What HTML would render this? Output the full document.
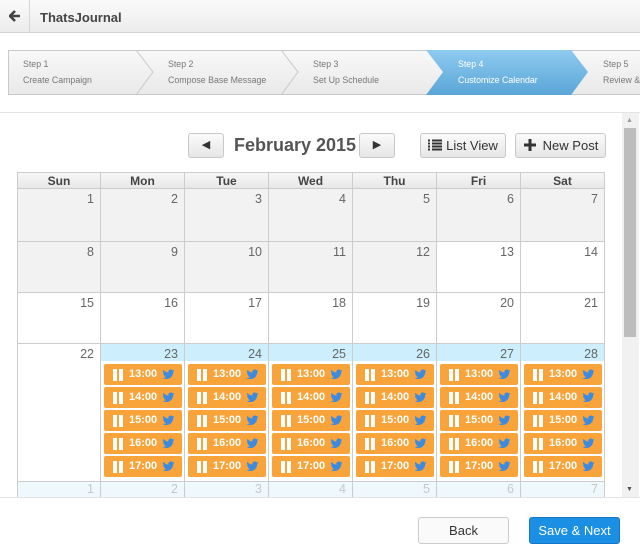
<!DOCTYPE html>
<html><head><meta charset="utf-8"><style>
*{box-sizing:border-box;margin:0;padding:0}
body{width:640px;height:548px;overflow:hidden;background:#fff;font-family:"Liberation Sans",Arial,sans-serif;position:relative;color:#555}
.a{position:absolute}
.top{left:0;top:0;width:640px;height:33px;background:linear-gradient(#fafafa,#ececec);border-bottom:1px solid #d0d0d0}
.steps{left:8px;top:50px;width:640px;height:45px;border:1px solid #c8c8c8;background:linear-gradient(#f8f8f8,#e9e9e9)}
.st{position:absolute;top:8px;font-size:8.8px;color:#777;line-height:16px;white-space:nowrap}
.btn{position:absolute;border:1px solid #c8c8c8;border-radius:3px;background:linear-gradient(#fafafa,#e6e6e6);font-size:13px;color:#333;text-align:center}
.c{position:absolute;border-right:1px solid #ccc;border-bottom:1px solid #ccc;font-size:12.5px;color:#666;text-align:right;padding:3px 6px 0 0}
.g{background:#f2f2f2}
.h{position:absolute;top:172px;height:17px;background:linear-gradient(#f6f6f6,#e8e8e8);border:1px solid #ccc;border-left:none;font-weight:bold;font-size:12px;color:#444;text-align:center;line-height:16px}
.ev{position:absolute;width:78px;height:21px;background:#f9a43a;border-radius:2px;color:#fff;font-weight:bold;font-size:11px}
.ev i{position:absolute;top:5px;width:4px;height:12px;background:#fff}
.ev span{position:absolute;left:25px;top:4px}
.ev svg{position:absolute;left:58px;top:4px;width:13px;height:13px}
.nx{position:absolute;top:482px;height:15px;background:#eef8fd;border-right:1px solid #ccc;color:#c8c8c8;font-size:12.5px;text-align:right;padding-right:6px;overflow:hidden}
</style></head><body>
<svg width="0" height="0" style="position:absolute"><symbol id="tw" viewBox="0 0 24 24"><path fill="#3d8be0" d="M23 5a9 9 0 0 1-2.6.7A4.5 4.5 0 0 0 22.4 3a9 9 0 0 1-2.9 1.1A4.5 4.5 0 0 0 11.8 8.2 12.8 12.8 0 0 1 2.5 3.5a4.5 4.5 0 0 0 1.4 6 4.5 4.5 0 0 1-2-.6 4.5 4.5 0 0 0 3.6 4.4 4.5 4.5 0 0 1-2 .1 4.5 4.5 0 0 0 4.2 3.1A9 9 0 0 1 1 18.4 12.8 12.8 0 0 0 7.9 20.4c8.3 0 12.8-6.9 12.8-12.8v-.6A9 9 0 0 0 23 5z"/></symbol></svg>
<div class="a top"></div>
<div class="a" style="left:29px;top:0;width:1px;height:32px;background:#d6d6d6"></div>
<svg class="a" style="left:9px;top:10px" width="12" height="12" viewBox="0 0 12 12"><path d="M6 1L1 6l5 5M1.5 6H11" stroke="#444" stroke-width="2.6" fill="none"/></svg>
<div class="a" style="left:40px;top:10px;font-size:13px;font-weight:bold;color:#444">ThatsJournal</div>

<div class="a steps"></div>
<svg class="a" style="left:8px;top:50px" width="632" height="45"><path d="M128 0l17 22-17 23M273 0l17 22-17 23" stroke="#c8c8c8" fill="none"/><defs><linearGradient id="bg" x1="0" y1="0" x2="0" y2="1"><stop offset="0" stop-color="#8ecbf0"/><stop offset="1" stop-color="#5aa5d8"/></linearGradient></defs><path d="M418 0h145l17 22-17 23H418l17-23z" fill="url(#bg)"/></svg>
<div class="st" style="left:23px;top:56px">Step 1<br>Create Campaign</div>
<div class="st" style="left:168px;top:56px">Step 2<br>Compose Base Message</div>
<div class="st" style="left:313px;top:56px">Step 3<br>Set Up Schedule</div>
<div class="st" style="left:458px;top:56px;color:#fff">Step 4<br>Customize Calendar</div>
<div class="st" style="left:603px;top:56px">Step 5<br>Review &amp;</div>

<div class="a" style="left:0;top:112px;width:640px;height:1px;background:#e4e4e4"></div>
<div class="a" style="left:622px;top:113px;width:17px;height:384px;background:#f1f1f1"></div>
<div class="a" style="left:624px;top:128px;width:12px;height:209px;background:#bdbdbd"></div>
<div class="a" style="left:626px;top:117px;font-size:7px;color:#999">▲</div>
<div class="a" style="left:626px;top:486px;font-size:7px;color:#555">▼</div>

<div class="btn" style="left:188px;top:133px;width:36px;height:25px;line-height:23px;font-size:11px">◀</div>
<div class="a" style="left:234px;top:135px;font-size:18px;font-weight:bold;color:#555">February 2015</div>
<div class="btn" style="left:359px;top:133px;width:36px;height:25px;line-height:23px;font-size:11px">▶</div>
<div class="btn" style="left:420px;top:133px;width:86px;height:25px;line-height:23px;padding-left:18px">List View</div>
<svg class="a" style="left:428px;top:139px" width="14" height="12"><path d="M0 1.5h2M4 1.5h10M0 4.5h2M4 4.5h10M0 7.5h2M4 7.5h10M0 10.5h2M4 10.5h10" stroke="#333" stroke-width="2"/></svg>
<div class="btn" style="left:515px;top:133px;width:91px;height:25px;line-height:23px;padding-left:20px">New Post</div>
<svg class="a" style="left:524px;top:139px" width="12" height="12"><path d="M6 0v12M0 6h12" stroke="#333" stroke-width="3"/></svg>

<div class="a" style="left:17px;top:172px;width:1px;height:325px;background:#ccc"></div>
<div class="h" style="left:17px;width:84px;border-left:1px solid #ccc">Sun</div>
<div class="h" style="left:101px;width:84px">Mon</div>
<div class="h" style="left:185px;width:84px">Tue</div>
<div class="h" style="left:269px;width:84px">Wed</div>
<div class="h" style="left:353px;width:84px">Thu</div>
<div class="h" style="left:437px;width:84px">Fri</div>
<div class="h" style="left:521px;width:84px">Sat</div>

<div class="c g" style="left:18px;top:189px;width:83px;height:53px">1</div>
<div class="c g" style="left:101px;top:189px;width:84px;height:53px">2</div>
<div class="c g" style="left:185px;top:189px;width:84px;height:53px">3</div>
<div class="c g" style="left:269px;top:189px;width:84px;height:53px">4</div>
<div class="c g" style="left:353px;top:189px;width:84px;height:53px">5</div>
<div class="c g" style="left:437px;top:189px;width:84px;height:53px">6</div>
<div class="c g" style="left:521px;top:189px;width:84px;height:53px">7</div>
<div class="c g" style="left:18px;top:242px;width:83px;height:51px">8</div>
<div class="c g" style="left:101px;top:242px;width:84px;height:51px">9</div>
<div class="c g" style="left:185px;top:242px;width:84px;height:51px">10</div>
<div class="c g" style="left:269px;top:242px;width:84px;height:51px">11</div>
<div class="c g" style="left:353px;top:242px;width:84px;height:51px">12</div>
<div class="c" style="left:437px;top:242px;width:84px;height:51px">13</div>
<div class="c" style="left:521px;top:242px;width:84px;height:51px">14</div>
<div class="c" style="left:18px;top:293px;width:83px;height:51px">15</div>
<div class="c" style="left:101px;top:293px;width:84px;height:51px">16</div>
<div class="c" style="left:185px;top:293px;width:84px;height:51px">17</div>
<div class="c" style="left:269px;top:293px;width:84px;height:51px">18</div>
<div class="c" style="left:353px;top:293px;width:84px;height:51px">19</div>
<div class="c" style="left:437px;top:293px;width:84px;height:51px">20</div>
<div class="c" style="left:521px;top:293px;width:84px;height:51px">21</div>
<div class="c" style="left:18px;top:344px;width:83px;height:138px">22</div>
<div class="c" style="left:101px;top:344px;width:84px;height:138px;background:linear-gradient(#cdeefc 17px,#fff 17px)">23</div>
<div class="c" style="left:185px;top:344px;width:84px;height:138px;background:linear-gradient(#cdeefc 17px,#fff 17px)">24</div>
<div class="c" style="left:269px;top:344px;width:84px;height:138px;background:linear-gradient(#cdeefc 17px,#fff 17px)">25</div>
<div class="c" style="left:353px;top:344px;width:84px;height:138px;background:linear-gradient(#cdeefc 17px,#fff 17px)">26</div>
<div class="c" style="left:437px;top:344px;width:84px;height:138px;background:linear-gradient(#cdeefc 17px,#fff 17px)">27</div>
<div class="c" style="left:521px;top:344px;width:84px;height:138px;background:linear-gradient(#cdeefc 17px,#fff 17px)">28</div>
<div class="nx" style="left:18px;width:83px">1</div>
<div class="nx" style="left:101px;width:84px">2</div>
<div class="nx" style="left:185px;width:84px">3</div>
<div class="nx" style="left:269px;width:84px">4</div>
<div class="nx" style="left:353px;width:84px">5</div>
<div class="nx" style="left:437px;width:84px">6</div>
<div class="nx" style="left:521px;width:84px">7</div>

<div class="a" style="left:104px;top:364px">
<div class="ev" style="left:0;top:0"><i style="left:9px"></i><i style="left:15px"></i><span>13:00</span><svg><use href="#tw"/></svg></div>
<div class="ev" style="left:0;top:23px"><i style="left:9px"></i><i style="left:15px"></i><span>14:00</span><svg><use href="#tw"/></svg></div>
<div class="ev" style="left:0;top:46px"><i style="left:9px"></i><i style="left:15px"></i><span>15:00</span><svg><use href="#tw"/></svg></div>
<div class="ev" style="left:0;top:69px"><i style="left:9px"></i><i style="left:15px"></i><span>16:00</span><svg><use href="#tw"/></svg></div>
<div class="ev" style="left:0;top:92px"><i style="left:9px"></i><i style="left:15px"></i><span>17:00</span><svg><use href="#tw"/></svg></div>
</div>
<div class="a" style="left:188px;top:364px">
<div class="ev" style="left:0;top:0"><i style="left:9px"></i><i style="left:15px"></i><span>13:00</span><svg><use href="#tw"/></svg></div>
<div class="ev" style="left:0;top:23px"><i style="left:9px"></i><i style="left:15px"></i><span>14:00</span><svg><use href="#tw"/></svg></div>
<div class="ev" style="left:0;top:46px"><i style="left:9px"></i><i style="left:15px"></i><span>15:00</span><svg><use href="#tw"/></svg></div>
<div class="ev" style="left:0;top:69px"><i style="left:9px"></i><i style="left:15px"></i><span>16:00</span><svg><use href="#tw"/></svg></div>
<div class="ev" style="left:0;top:92px"><i style="left:9px"></i><i style="left:15px"></i><span>17:00</span><svg><use href="#tw"/></svg></div>
</div>
<div class="a" style="left:272px;top:364px">
<div class="ev" style="left:0;top:0"><i style="left:9px"></i><i style="left:15px"></i><span>13:00</span><svg><use href="#tw"/></svg></div>
<div class="ev" style="left:0;top:23px"><i style="left:9px"></i><i style="left:15px"></i><span>14:00</span><svg><use href="#tw"/></svg></div>
<div class="ev" style="left:0;top:46px"><i style="left:9px"></i><i style="left:15px"></i><span>15:00</span><svg><use href="#tw"/></svg></div>
<div class="ev" style="left:0;top:69px"><i style="left:9px"></i><i style="left:15px"></i><span>16:00</span><svg><use href="#tw"/></svg></div>
<div class="ev" style="left:0;top:92px"><i style="left:9px"></i><i style="left:15px"></i><span>17:00</span><svg><use href="#tw"/></svg></div>
</div>
<div class="a" style="left:356px;top:364px">
<div class="ev" style="left:0;top:0"><i style="left:9px"></i><i style="left:15px"></i><span>13:00</span><svg><use href="#tw"/></svg></div>
<div class="ev" style="left:0;top:23px"><i style="left:9px"></i><i style="left:15px"></i><span>14:00</span><svg><use href="#tw"/></svg></div>
<div class="ev" style="left:0;top:46px"><i style="left:9px"></i><i style="left:15px"></i><span>15:00</span><svg><use href="#tw"/></svg></div>
<div class="ev" style="left:0;top:69px"><i style="left:9px"></i><i style="left:15px"></i><span>16:00</span><svg><use href="#tw"/></svg></div>
<div class="ev" style="left:0;top:92px"><i style="left:9px"></i><i style="left:15px"></i><span>17:00</span><svg><use href="#tw"/></svg></div>
</div>
<div class="a" style="left:440px;top:364px">
<div class="ev" style="left:0;top:0"><i style="left:9px"></i><i style="left:15px"></i><span>13:00</span><svg><use href="#tw"/></svg></div>
<div class="ev" style="left:0;top:23px"><i style="left:9px"></i><i style="left:15px"></i><span>14:00</span><svg><use href="#tw"/></svg></div>
<div class="ev" style="left:0;top:46px"><i style="left:9px"></i><i style="left:15px"></i><span>15:00</span><svg><use href="#tw"/></svg></div>
<div class="ev" style="left:0;top:69px"><i style="left:9px"></i><i style="left:15px"></i><span>16:00</span><svg><use href="#tw"/></svg></div>
<div class="ev" style="left:0;top:92px"><i style="left:9px"></i><i style="left:15px"></i><span>17:00</span><svg><use href="#tw"/></svg></div>
</div>
<div class="a" style="left:524px;top:364px">
<div class="ev" style="left:0;top:0"><i style="left:9px"></i><i style="left:15px"></i><span>13:00</span><svg><use href="#tw"/></svg></div>
<div class="ev" style="left:0;top:23px"><i style="left:9px"></i><i style="left:15px"></i><span>14:00</span><svg><use href="#tw"/></svg></div>
<div class="ev" style="left:0;top:46px"><i style="left:9px"></i><i style="left:15px"></i><span>15:00</span><svg><use href="#tw"/></svg></div>
<div class="ev" style="left:0;top:69px"><i style="left:9px"></i><i style="left:15px"></i><span>16:00</span><svg><use href="#tw"/></svg></div>
<div class="ev" style="left:0;top:92px"><i style="left:9px"></i><i style="left:15px"></i><span>17:00</span><svg><use href="#tw"/></svg></div>
</div>

<div class="a" style="left:0;top:497px;width:640px;height:51px;background:#fff;border-top:1px solid #e4e4e4"></div>
<div class="btn" style="left:418px;top:517px;width:91px;height:27px;line-height:25px;background:#fafafa;border-color:#ccc">Back</div>
<div class="btn" style="left:529px;top:517px;width:91px;height:27px;line-height:25px;background:#1a8fe3;border-color:#1479c4;color:#fff">Save &amp; Next</div>
</body></html>
